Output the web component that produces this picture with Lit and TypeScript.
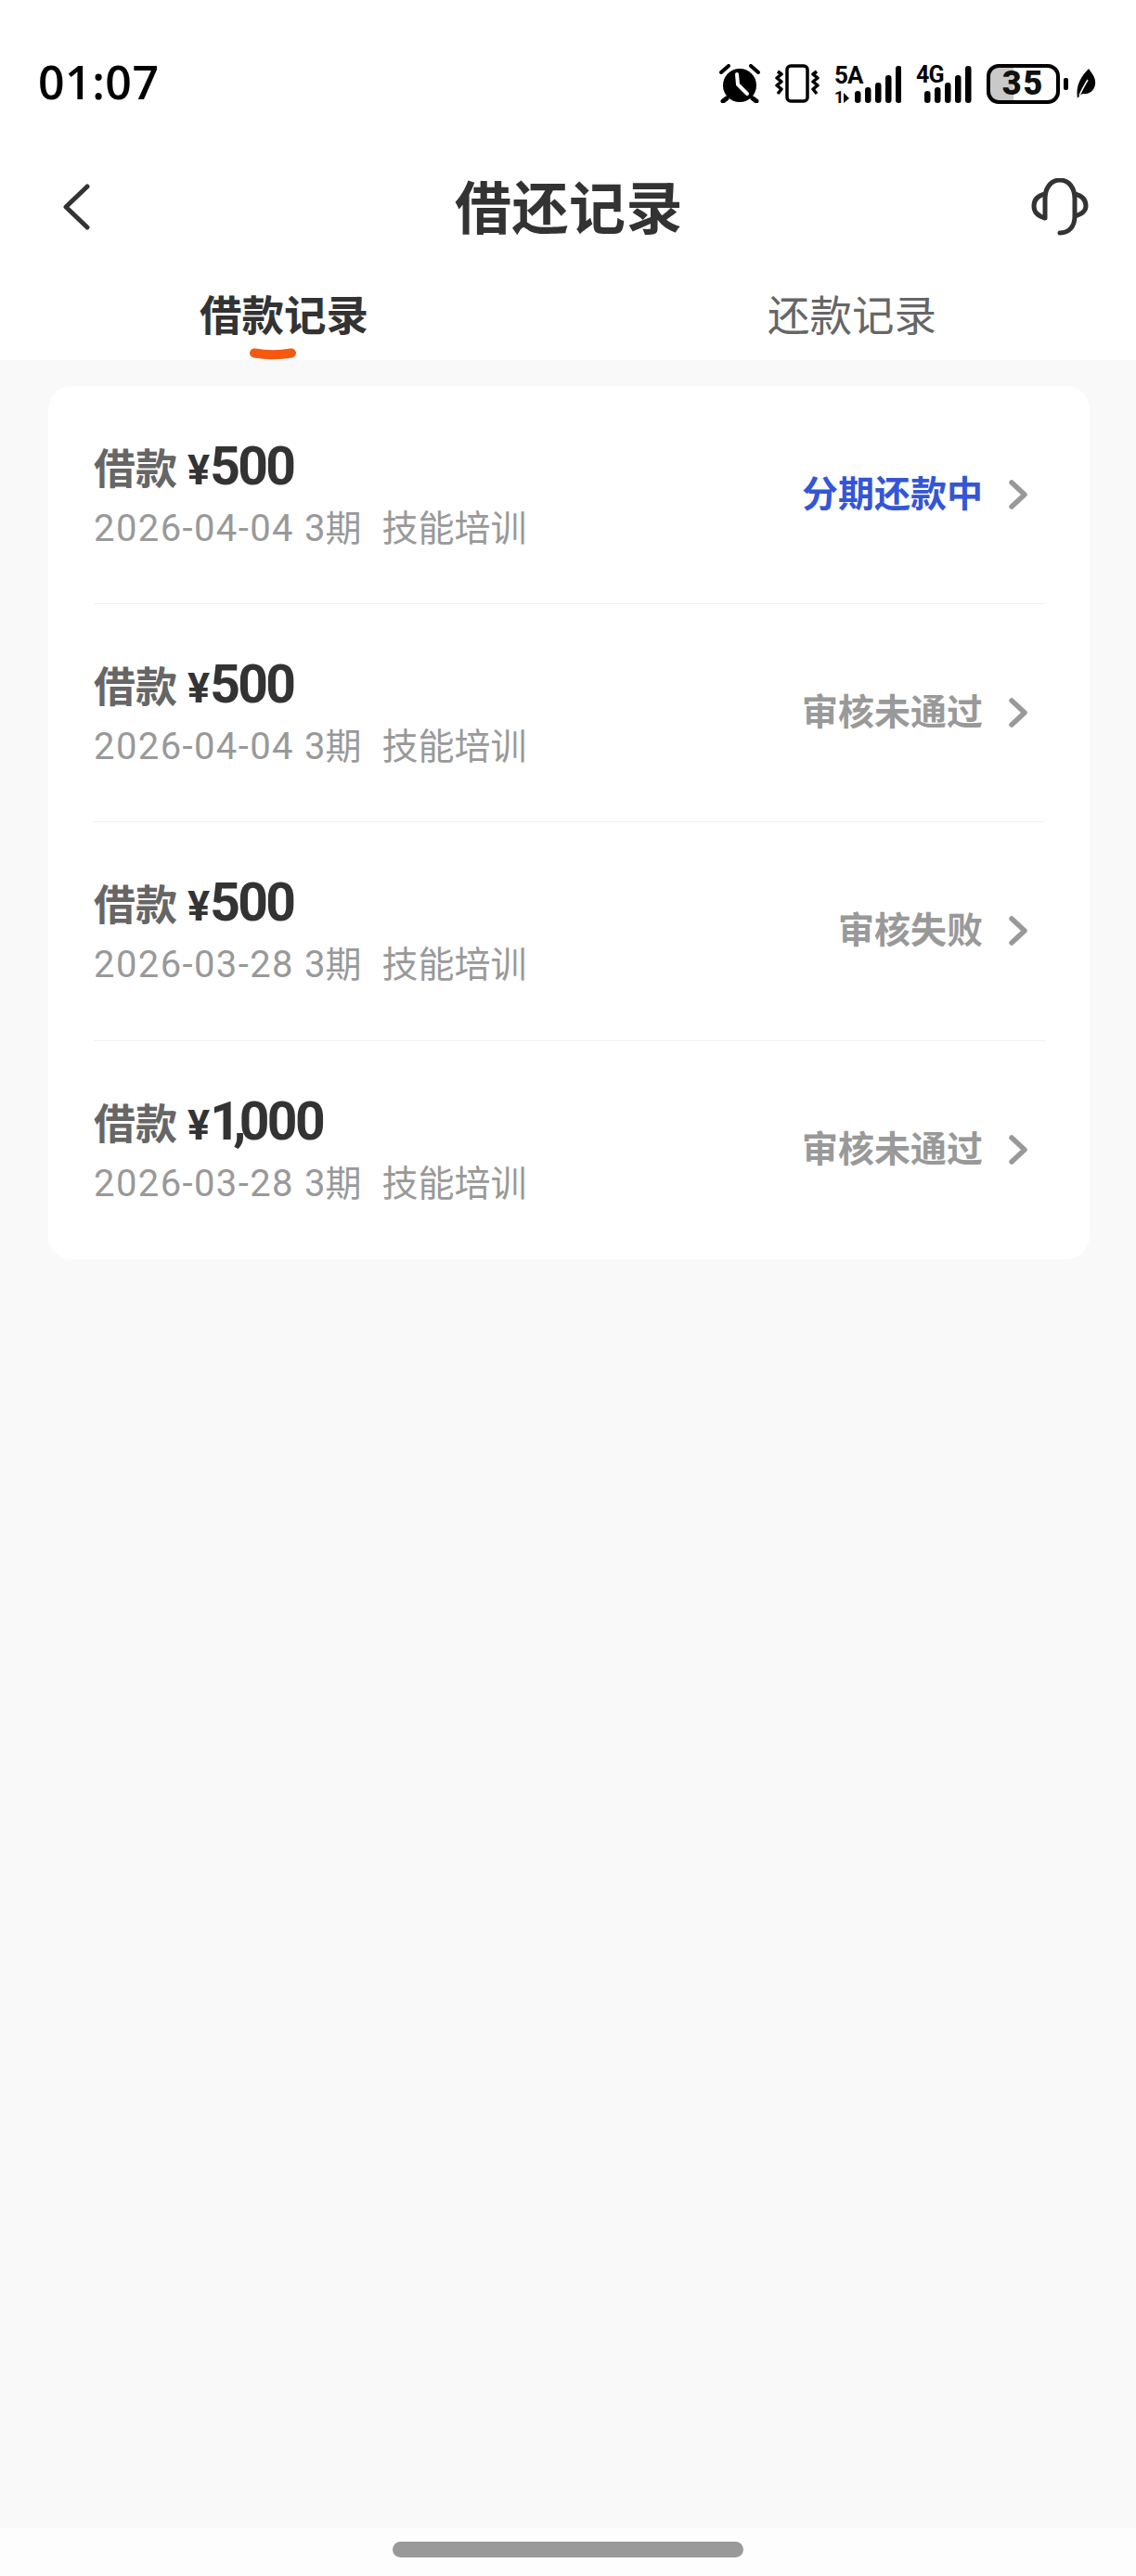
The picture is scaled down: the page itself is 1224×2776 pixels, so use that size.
import { LitElement, html, css, svg } from "lit";
import { customElement } from "lit/decorators.js";

const rows = [
  { amount: "500", date: "2026-04-04", status: "分期还款中", active: true },
  { amount: "500", date: "2026-04-04", status: "审核未通过", active: false },
  { amount: "500", date: "2026-03-28", status: "审核失败", active: false },
  { amount: "1,000", date: "2026-03-28", status: "审核未通过", active: false },
];

const bars = (heights: number[], x0: number) =>
  heights.map(
    (h, i) => svg`<rect x=${x0 + i * 11} y=${42 - h} width="6.5" height=${h} rx="3.2" fill="#000"></rect>`
  );

const amountParts = (a: string) => {
  const parts = a.split(",");
  return parts.length === 1
    ? a
    : html`${parts[0]}<span class="comma">,</span>${parts[1]}`;
};

@customElement("app-root")
export class AppRoot extends LitElement {
  static styles = css`
    :host {
      display: flex;
      flex-direction: column;
      width: 1224px;
      height: 2776px;
      background: #f9f9f9;
      font-family: "Noto Sans CJK SC", sans-serif;
      overflow: hidden;
    }
    .top { background: #fff; display: flex; flex-direction: column; }
    .status {
      height: 180px;
      display: flex;
      align-items: center;
      justify-content: space-between;
      padding: 0 43px 4px 41px;
      box-sizing: border-box;
    }
    .time {
      font: 600 50px/1 "Open Sans", sans-serif;
      color: #000;
      letter-spacing: 0.5px;
    }
    .icons { display: flex; align-items: center; gap: 16px; transform: translateY(2px); }
    .icons svg { display: block; }
    .icons text { font-family: "Roboto", sans-serif; font-weight: 700; fill: #000; }
    .battery-wrap { display: flex; align-items: center; gap: 4px; }
    .battery {
      width: 79px;
      height: 43px;
      box-sizing: border-box;
      border: 4px solid #000;
      border-radius: 13px;
      overflow: hidden;
      background: linear-gradient(to right, #c9c9c9 0 35%, #fff 35% 100%);
      display: flex;
      align-items: center;
      justify-content: center;
      font: 900 36px/1 "Roboto", sans-serif;
      letter-spacing: 2px;
      color: #111;
    }
    .nub { width: 5px; height: 13px; background: #000; border-radius: 2px; margin-right: 5px; }
    .nav {
      height: 86px;
      display: grid;
      grid-template-columns: 1fr auto 1fr;
      align-items: center;
      padding: 0 51px 0 66px;
    }
    .nav svg { display: block; }
    .nav svg.end { justify-self: end; }
    .title {
      font-size: 61px;
      font-weight: 700;
      line-height: 1;
      color: #333;
      margin: -6px 0 0 -13px;
      letter-spacing: 0.5px;
    }
    .tabs {
      height: 122px;
      display: grid;
      grid-template-columns: 1fr 1fr;
      box-sizing: border-box;
      padding-top: 41px;
    }
    .tab {
      font-size: 45.5px;
      line-height: 60px;
      height: 60px;
      color: #666;
      text-align: center;
      position: relative;
    }
    .tab.on { font-weight: 700; color: #333; }
    .tab svg { position: absolute; left: 269px; top: 68px; display: block; }
    .content { flex: 1; padding: 28px 52px 0; box-sizing: border-box; }
    .card { background: #fff; border-radius: 25px; padding: 0 48px 0 49px; width: 1122px; box-sizing: border-box; }
    .row {
      height: 235.2px;
      box-sizing: border-box;
      border-bottom: 1px solid #f1f1f1;
      display: flex;
      align-items: center;
      justify-content: space-between;
      padding-right: 18px;
    }
    .row:last-child { border-bottom: 0; }
    .left-col { display: flex; flex-direction: column; gap: 8px; }
    .line1 { display: flex; align-items: baseline; height: 58px; line-height: 58px; }
    .label { font-size: 45px; font-weight: 700; color: #666; margin-right: 11px; }
    .yen { font: 700 45px/58px "Roboto", sans-serif; color: #333; }
    .amount { font: 700 57px/58px "Roboto", sans-serif; color: #333; letter-spacing: -2.6px; }
    .comma { margin: 0 -5px; }
    .line2 { display: flex; align-items: baseline; height: 52px; line-height: 52px; color: #999; font-size: 39px; }
    .date { font: 400 40px/52px "Roboto", sans-serif; letter-spacing: 1.4px; }
    .period { margin-left: 11px; }
    .per3 { font: 400 40px/52px "Roboto", sans-serif; }
    .cat { margin-left: 22px; font-size: 39px; }
    .right-col { display: flex; align-items: center; gap: 28px; }
    .st { font-size: 39px; font-weight: 700; color: #999; line-height: 50px; margin-top: -9px; }
    .st.active { color: #3456d6; }
    .right-col svg { display: block; margin-top: -1px; }
    .foot {
      height: 52px;
      background: #fdfdfd;
      display: flex;
      justify-content: center;
      padding-top: 15px;
      box-sizing: border-box;
    }
    .pill { width: 378px; height: 17px; border-radius: 9px; background: #999; }
  `;

  render() {
    return html`
      <div class="top">
        <div class="status">
          <span class="time">01:07</span>
          <div class="icons">
            <svg width="44" height="42" viewBox="0 0 44 42">
              <path d="M2 9 L10 2 M42 9 L34 2" stroke="#000" stroke-width="4" stroke-linecap="round"></path>
              <circle cx="22" cy="23" r="18" fill="#000"></circle>
              <path d="M8 37 L4 40 M36 37 L40 40" stroke="#000" stroke-width="5" stroke-linecap="round"></path>
              <path d="M19 11 L20 22 L30 32" stroke="#fff" stroke-width="4" fill="none" stroke-linecap="round" stroke-linejoin="round"></path>
            </svg>
            <svg width="48" height="42" viewBox="0 0 48 42">
              <rect x="13" y="2" width="22" height="38" rx="4" fill="none" stroke="#000" stroke-width="3.5"></rect>
              <path d="M3 8 L7 11 L2 15 L7 19 L2 23 L7 27 L3 32" fill="none" stroke="#000" stroke-width="3.5" stroke-linejoin="round"></path>
              <path d="M45 8 L41 11 L46 15 L41 19 L46 23 L41 27 L45 32" fill="none" stroke="#000" stroke-width="3.5" stroke-linejoin="round"></path>
            </svg>
            <svg width="72" height="50" viewBox="0 -4 72 50">
              <text x="0" y="21" font-size="26" letter-spacing="-0.8">5A</text>
              <text x="0" y="42" font-size="18">1</text>
              <path d="M10 31 V42 L16 37 Z" fill="#000"></path>
              ${bars([13, 17, 22, 30, 40], 22)}
            </svg>
            <svg width="60" height="50" viewBox="0 -4 60 50">
              <text x="0" y="20" font-size="25" letter-spacing="-0.8">4G</text>
              ${bars([13, 17, 22, 30, 40], 9)}
            </svg>
            <div class="battery-wrap">
              <div class="battery">35</div>
              <div class="nub"></div>
              <svg width="21" height="33" viewBox="0 0 21 33">
                <path d="M13 0 C17 6 21 10 20 17 C19 24 13 28 7 27 C3 28 1 32 1 32 C-1 20 3 10 13 0 Z" fill="#000"></path>
                <path d="M3 29 C6 22 9 17 12 12" fill="none" stroke="#fff" stroke-width="1.5"></path>
              </svg>
            </div>
          </div>
        </div>
        <div class="nav">
          <svg width="32" height="50" viewBox="0 0 32 50">
            <path d="M28 3 L5 25 L28 47" fill="none" stroke="#333" stroke-width="5" stroke-linecap="round" stroke-linejoin="round"></path>
          </svg>
          <span class="title">借还记录</span>
          <svg class="end" width="62" height="62" viewBox="0 0 62 62">
            <path d="M15 43 V22 C15 11 21 2 31 2 C41 2 47 11 47 22 V41 C47 52 41 59 31 59" fill="none" stroke="#333" stroke-width="5" stroke-linecap="round"></path>
            <path d="M15 17 C6 19 3 24 3 30 C3 37 8 41 15 43" fill="none" stroke="#333" stroke-width="5" stroke-linejoin="round"></path>
            <path d="M47 17 C56 19 59 24 59 30 C59 36 54 39 47 41" fill="none" stroke="#333" stroke-width="5" stroke-linejoin="round"></path>
          </svg>
        </div>
        <div class="tabs">
          <div class="tab on">借款记录
            <svg width="50" height="13" viewBox="0 0 50 13">
              <path d="M5 5.5 Q25 9 45 5.5" fill="none" stroke="#f4590f" stroke-width="10" stroke-linecap="round"></path>
            </svg>
          </div>
          <div class="tab">还款记录</div>
        </div>
      </div>
      <div class="content">
        <div class="card">
          ${rows.map(
            (r) => html`
              <div class="row">
                <div class="left-col">
                  <div class="line1">
                    <span class="label">借款</span><span class="yen">¥</span><span class="amount">${amountParts(r.amount)}</span>
                  </div>
                  <div class="line2">
                    <span class="date">${r.date}</span><span class="period"><span class="per3">3</span>期</span><span class="cat">技能培训</span>
                  </div>
                </div>
                <div class="right-col">
                  <span class="st ${r.active ? "active" : ""}">${r.status}</span>
                  <svg width="21" height="32" viewBox="0 0 21 32">
                    <path d="M3 3 L17 16 L3 29" fill="none" stroke="#999" stroke-width="5.5" stroke-linecap="round" stroke-linejoin="round"></path>
                  </svg>
                </div>
              </div>
            `
          )}
        </div>
      </div>
      <div class="foot"><div class="pill"></div></div>
    `;
  }
}
